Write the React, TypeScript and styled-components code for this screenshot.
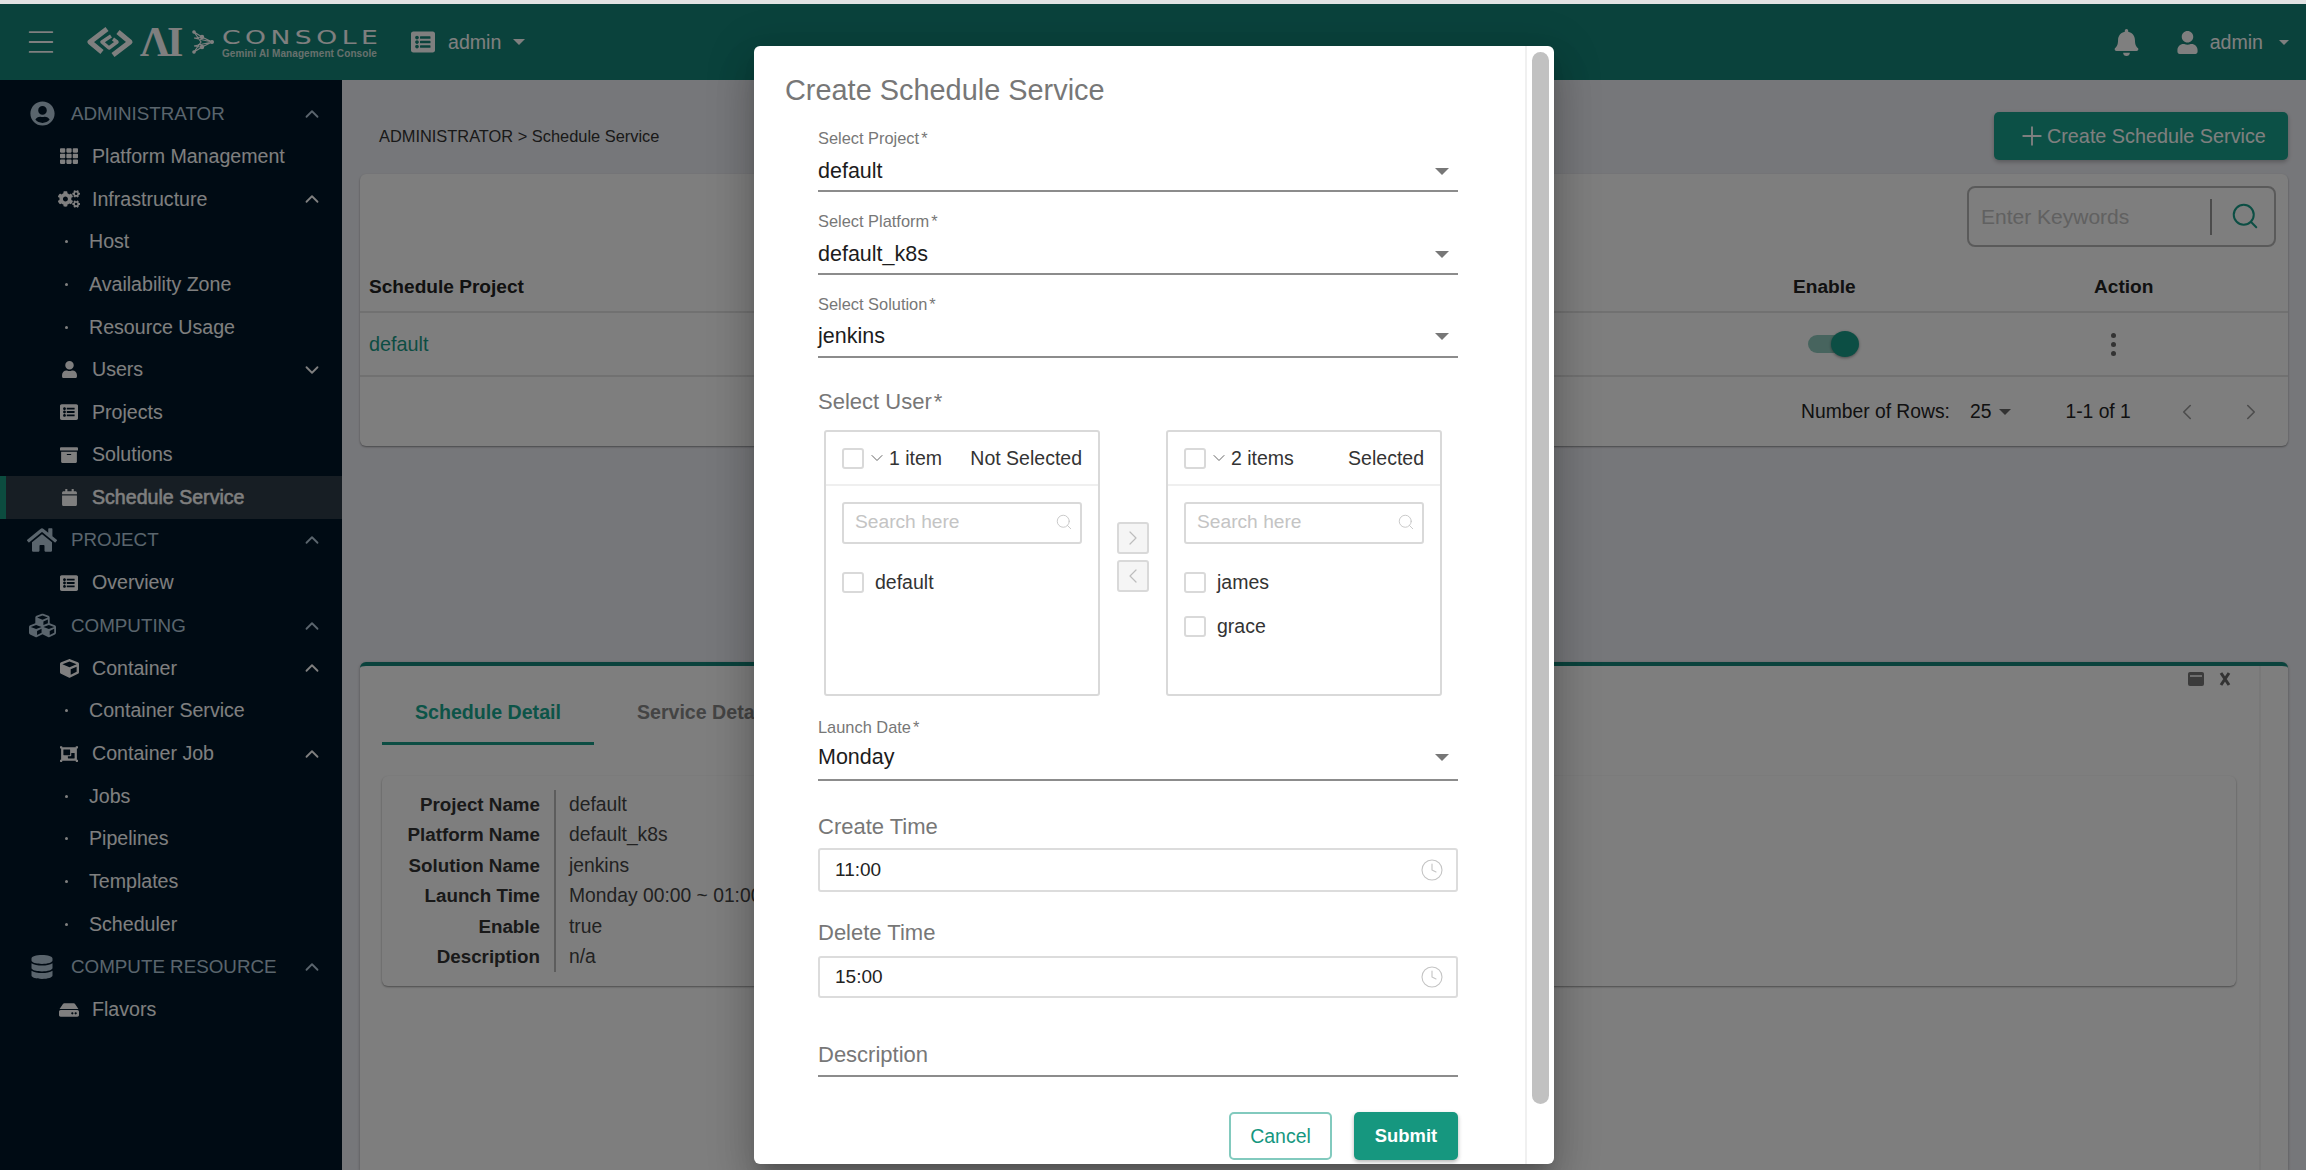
import React, { FC, ReactNode } from "react";
import styled, { createGlobalStyle } from "styled-components";
import { ChevronDown, ChevronLeft, ChevronRight, ChevronUp, Clock, Menu, Plus, Search } from "lucide-react";
import {
  FaArchive,
  FaBell,
  FaCalendar,
  FaCogs,
  FaCube,
  FaCubes,
  FaDatabase,
  FaHdd,
  FaHome,
  FaListAlt,
  FaObjectGroup,
  FaTh,
  FaUser,
  FaUserCircle,
} from "react-icons/fa";

const GlobalStyle = createGlobalStyle`
  html, body {
    margin: 0;
    padding: 0;
    background: #e2e3e3;
  }
  * {
    box-sizing: border-box;
  }
  body {
    font-family: "Liberation Sans", Arial, sans-serif;
    color: #333;
    overflow: hidden;
  }
`;

const Page = styled.div`
  position: relative;
  width: 2306px;
  height: 1170px;
  overflow: hidden;
  display: flex;
  flex-direction: column;
  padding-top: 4px;
`;

const Header = styled.header`
  height: 76px;
  flex: none;
  background: #158578;
  color: #fff;
  display: flex;
  align-items: center;
  padding-left: 24px;
`;

const LogoMark = styled.svg`
  margin-left: 28px;
  width: 48px;
  height: 32px;
  flex: none;
`;

const LogoAi = styled.span`
  margin-left: 6px;
  width: 44px;
  font-family: "Liberation Serif", serif;
  font-size: 42px;
  line-height: 42px;
  font-weight: 700;
  letter-spacing: -3px;
`;

const LogoNet = styled.svg`
  margin-left: 8px;
  width: 22px;
  height: 26px;
  flex: none;
`;

const LogoText = styled.div`
  margin-left: 8px;
  width: 156px;
  display: flex;
  flex-direction: column;
  gap: 3px;
  padding-top: 2px;
`;

const LogoWord = styled.span`
  display: block;
  font-family: "DejaVu Sans", sans-serif;
  font-size: 19px;
  line-height: 18px;
  letter-spacing: 3.2px;
  transform: scaleX(1.4);
  transform-origin: left center;
  white-space: nowrap;
`;

const LogoSub = styled.span`
  font-size: 10px;
  line-height: 10px;
  font-weight: 700;
  letter-spacing: 0.09px;
  white-space: nowrap;
  color: #cfe0dc;
`;

const HeaderMenu = styled.div`
  margin-left: 33px;
  display: flex;
  align-items: center;
  font-size: 19.6px;
  gap: 13px;
`;

const HeaderRight = styled.div`
  margin-left: auto;
  display: flex;
  align-items: center;
  padding-right: 17px;
`;

const UserIcon = styled(FaUser)`
  margin-left: 36px;
`;

const UserName = styled.span`
  margin-left: 11px;
  font-size: 19.6px;
`;

const Caret = styled.i<{ $size?: number; $tone?: string; $gap?: number }>`
  display: inline-block;
  width: 0;
  height: 0;
  margin-left: ${(p) => p.$gap ?? 0}px;
  border-left: ${(p) => p.$size ?? 7}px solid transparent;
  border-right: ${(p) => p.$size ?? 7}px solid transparent;
  border-top: ${(p) => p.$size ?? 7}px solid ${(p) => p.$tone ?? "currentColor"};
`;

const Body = styled.div`
  flex: 1;
  min-height: 0;
  display: flex;
`;

const Sidebar = styled.nav`
  width: 342px;
  flex: none;
  background: #001628;
  padding-top: 12.4px;
`;

const Row = styled.div<{ $active?: boolean }>`
  height: 42.67px;
  display: flex;
  align-items: center;
  padding-right: 19px;
  background: ${(p) => (p.$active ? "#2f3c48" : "transparent")};
  border-left: 6px solid ${(p) => (p.$active ? "#18987f" : "transparent")};
  color: #fff;
  font-size: 19.6px;
  -webkit-text-stroke: ${(p) => (p.$active ? "0.5px #fff" : "0")};
`;

const SectionRow = styled(Row)`
  color: #b5cada;
  font-size: 18.8px;
`;

const IconSlot = styled.span<{ $left: number; $width: number }>`
  margin-left: ${(p) => p.$left}px;
  width: ${(p) => p.$width}px;
  flex: none;
  display: flex;
  justify-content: center;
  align-items: center;
`;

const RowLabel = styled.span<{ $gap?: number }>`
  flex: 1;
  margin-left: ${(p) => p.$gap ?? 0}px;
  white-space: nowrap;
`;

const SubDot = styled.span`
  margin-left: 59px;
  margin-right: 21px;
  width: 3px;
  height: 3px;
  background: #fff;
  border-radius: 50%;
  flex: none;
`;

const Main = styled.main`
  flex: 1;
  min-width: 0;
  background: #edeef4;
  padding: 0 18px;
  display: flex;
  flex-direction: column;
`;

const TopBar = styled.div`
  margin-top: 32px;
  height: 48px;
  flex: none;
  display: flex;
  align-items: center;
  justify-content: space-between;
  padding-left: 19px;
`;

const Crumb = styled.div`
  font-size: 16.4px;
  color: #333;
`;

const CreateButton = styled.button`
  width: 294px;
  height: 48px;
  border: 0;
  border-radius: 5px;
  background: #18a08c;
  color: #fff;
  font: 400 19.8px "Liberation Sans", sans-serif;
  display: flex;
  align-items: center;
  padding: 0 0 0 23px;
  box-shadow: 0 2px 4px rgba(0, 0, 0, 0.25);
`;

const Card = styled.section`
  margin-top: 14px;
  height: 272px;
  flex: none;
  background: #fcfcfc;
  border-radius: 6px;
  box-shadow: 0 1px 2px rgba(0, 0, 0, 0.4);
  display: flex;
  flex-direction: column;
`;

const SearchRow = styled.div`
  height: 90px;
  flex: none;
  display: flex;
  justify-content: flex-end;
  padding: 12px 12px 0 0;
`;

const SearchBox = styled.div`
  width: 309px;
  height: 61px;
  border: 2px solid #b5b5b5;
  border-radius: 8px;
  display: flex;
  align-items: center;
  padding-left: 12px;
  color: #c2c2c2;
  font-size: 21px;
`;

const SearchHint = styled.span`
  flex: 1;
  height: 36px;
  line-height: 36px;
  border-right: 2px solid #999;
`;

const SearchIconWrap = styled.span`
  width: 62px;
  padding-left: 4px;
  margin-top: -2px;
  display: flex;
  justify-content: center;
  color: #189c88;
`;

const TableGrid = styled.div<{ $height: number }>`
  height: ${(p) => p.$height}px;
  flex: none;
  display: grid;
  grid-template-columns: 1424px 301px 1fr;
  align-items: center;
  padding-left: 9px;
  font-size: 19.8px;
  border-bottom: 2px solid #e3e3e3;
`;

const HeadCell = styled.div`
  font-size: 19.1px;
  font-weight: 700;
  color: #222;
  padding-bottom: 2px;
`;

const TealLink = styled.span`
  color: #189a86;
`;

const Toggle = styled.span`
  margin-left: 15px;
  display: block;
  position: relative;
  width: 36px;
  height: 18px;
  border-radius: 9px;
  background: #8fc9bd;
`;

const ToggleKnob = styled.span`
  position: absolute;
  top: -4px;
  right: -15px;
  width: 28px;
  height: 26px;
  border-radius: 50%;
  background: #189c88;
  box-shadow: 0 1px 3px rgba(0, 0, 0, 0.4);
`;

const MoreDots = styled.span`
  margin-left: 17px;
  display: flex;
  flex-direction: column;
  gap: 4px;
  width: 6px;
`;

const Dot = styled.i`
  display: block;
  width: 5px;
  height: 5px;
  border-radius: 50%;
  background: #666;
`;

const Pager = styled.div`
  flex: 1;
  display: flex;
  align-items: center;
  padding-left: 1441px;
  font-size: 19.3px;
  color: #222;
`;

const PagerValue = styled.span<{ $left: number }>`
  margin-left: ${(p) => p.$left}px;
  display: flex;
  align-items: center;
`;

const Panel = styled.section`
  margin-top: 216px;
  flex: 1;
  min-height: 0;
  background: #fcfcfc;
  border-top: 4px solid #158578;
  border-radius: 6px 6px 0 0;
  box-shadow: 0 1px 3px rgba(0, 0, 0, 0.35);
  display: flex;
`;

const PanelBody = styled.div`
  flex: 1;
  min-width: 0;
  display: flex;
  flex-direction: column;
`;

const PanelTrack = styled.div`
  width: 29px;
  flex: none;
  border-left: 2px solid #f0f0f0;
`;

const PanelActions = styled.div`
  height: 20px;
  margin-top: 3px;
  display: flex;
  justify-content: flex-end;
  align-items: center;
  gap: 15px;
  padding-right: 28px;
  color: #666;
`;

const MinimizeBox = styled.span`
  display: block;
  width: 16px;
  height: 14px;
  border-radius: 2px;
  background: #777;
  border-top: 3px solid #777;
  position: relative;
  &::after {
    content: "";
    position: absolute;
    left: 2px;
    right: 2px;
    top: 0;
    height: 2px;
    background: #ddd;
  }
`;

const CloseMark = styled.svg`
  width: 12px;
  height: 14px;
`;

const Tabs = styled.div`
  display: flex;
  margin: 0 0 0 22px;
  height: 56px;
`;

const Tab = styled.div<{ $active?: boolean }>`
  height: 56px;
  padding: 8px 33px 0;
  line-height: 30px;
  font-size: 19.6px;
  font-weight: 700;
  white-space: nowrap;
  color: ${(p) => (p.$active ? "#18a890" : "#888")};
  border-bottom: 3px solid ${(p) => (p.$active ? "#189a86" : "transparent")};
  margin-right: 10px;
`;

const DetailCard = styled.div`
  margin: 31px 23px 0 22px;
  height: 210px;
  background: #fdfdfd;
  border-radius: 6px;
  box-shadow: 0 1px 2px rgba(0, 0, 0, 0.4);
  padding-top: 14px;
  display: grid;
  grid-template-columns: 174px 1fr;
  grid-auto-rows: 30.4px;
  font-size: 19.3px;
  align-items: stretch;
`;

const DetailName = styled.div`
  font-size: 18.8px;
  font-weight: 700;
  color: #333;
  text-align: right;
  padding-right: 14px;
  border-right: 2px solid #bbb;
  line-height: 30.4px;
`;

const DetailValue = styled.div`
  padding-left: 13px;
  color: #444;
  line-height: 30.4px;
  white-space: nowrap;
`;

const Overlay = styled.div`
  position: absolute;
  left: 0;
  right: 0;
  top: 4px;
  bottom: 0;
  background: rgba(0, 0, 0, 0.5);
`;

const Modal = styled.div`
  position: absolute;
  left: 754px;
  top: 46px;
  width: 800px;
  height: 1118px;
  background: #fff;
  border-radius: 6px;
  overflow: hidden;
  display: flex;
  box-shadow: 0 11px 15px -7px rgba(0, 0, 0, 0.2), 0 24px 38px 3px rgba(0, 0, 0, 0.14),
    0 9px 46px 8px rgba(0, 0, 0, 0.12);
`;

const ModalScroll = styled.div`
  flex: 1;
  min-width: 0;
  padding: 26px 0 0 31px;
  overflow: hidden;
`;

const ModalGutter = styled.div`
  width: 29px;
  flex: none;
  border-left: 2px solid #f0f0f0;
  padding: 6px 5px 0 5px;
`;

const ScrollThumb = styled.div`
  width: 17px;
  height: 1052px;
  border-radius: 9px;
  background: #c1c1c1;
`;

const ModalTitle = styled.h2`
  margin: 0 0 22px;
  height: 34px;
  line-height: 36px;
  font-size: 28.9px;
  font-weight: 400;
  color: #777;
`;

const Form = styled.div`
  margin-left: 33px;
  width: 640px;
`;

const Field = styled.div<{ $top?: number }>`
  margin-top: ${(p) => p.$top ?? 0}px;
`;

const SmallLabel = styled.div`
  height: 20px;
  line-height: 20px;
  font-size: 16.4px;
  color: #777;
`;

const Required = styled.span`
  margin-left: 2px;
`;

const SelectBox = styled.div<{ $lift?: number }>`
  height: 44px;
  padding-top: ${(p) => 4 - (p.$lift ?? 0)}px;
  padding-bottom: ${(p) => p.$lift ?? 0}px;
  border-bottom: 2px solid #8c8c8c;
  display: flex;
  align-items: center;
  justify-content: space-between;
  padding-right: 9px;
  font-size: 21.5px;
  color: #1c1c1c;
`;

const BigLabel = styled.div<{ $top: number }>`
  margin-top: ${(p) => p.$top}px;
  height: 26px;
  line-height: 26px;
  font-size: 22px;
  color: #777;
`;

const TransferWrap = styled.div`
  margin: 15px 0 0 6px;
  display: flex;
`;

const TransferBox = styled.div`
  width: 276px;
  height: 266px;
  flex: none;
  border: 2px solid #d9d9d9;
  border-radius: 3px;
`;

const TransferHead = styled.div`
  height: 54px;
  border-bottom: 2px solid #efefef;
  padding: 0 16px;
  display: flex;
  align-items: center;
  font-size: 19.5px;
  color: #333;
`;

const Check = styled.span`
  display: block;
  width: 22px;
  height: 21px;
  flex: none;
  border: 2px solid #d9d9d9;
  border-radius: 3px;
  background: #fff;
`;

const HeadChevron = styled.span`
  margin: 0 2px 0 3px;
  display: flex;
  color: #666;
`;

const HeadTitle = styled.span`
  margin-left: auto;
`;

const TransferSearch = styled.div`
  margin: 16px 16px 16px;
  height: 42px;
  border: 2px solid #d9d9d9;
  border-radius: 3px;
  padding: 0 7px 2px 11px;
  display: flex;
  align-items: center;
  justify-content: space-between;
  font-size: 19.2px;
  color: #c4c4c4;
`;

const TransferItem = styled.div`
  height: 44px;
  padding: 0 16px;
  display: flex;
  align-items: center;
  gap: 11px;
  font-size: 19.5px;
  color: #333;
`;

const TransferButtons = styled.div`
  width: 66px;
  flex: none;
  padding-top: 92px;
  display: flex;
  flex-direction: column;
  align-items: center;
  gap: 6px;
`;

const MoveButton = styled.span`
  width: 32px;
  height: 32px;
  border: 2px solid #d9d9d9;
  border-radius: 3px;
  background: #f5f5f5;
  color: #bdbdbd;
  display: flex;
  align-items: center;
  justify-content: center;
`;

const TimeInput = styled.div<{ $height: number; $top: number }>`
  margin-top: ${(p) => p.$top}px;
  height: ${(p) => p.$height}px;
  border: 2px solid #dcdcdc;
  border-radius: 3px;
  padding: 0 12px 0 15px;
  display: flex;
  align-items: center;
  justify-content: space-between;
  font-size: 19px;
  color: #222;
`;

const DescriptionField = styled.div`
  margin-top: 41px;
  height: 38px;
  border-bottom: 2px solid #8c8c8c;
  font-size: 22px;
  line-height: 32px;
  color: #777;
`;

const Actions = styled.div`
  margin-top: 35px;
  display: flex;
  justify-content: flex-end;
  gap: 22px;
`;

const CancelButton = styled.button`
  width: 103px;
  height: 48px;
  border: 2px solid #82cabe;
  border-radius: 5px;
  background: #fff;
  color: #16977f;
  font: 400 19.5px "Liberation Sans", sans-serif;
`;

const SubmitButton = styled.button`
  width: 104px;
  height: 48px;
  border: 0;
  border-radius: 5px;
  background: #16977f;
  color: #fff;
  font: 700 18.4px "Liberation Sans", sans-serif;
  box-shadow: 0 2px 4px rgba(0, 0, 0, 0.3);
`;

type NavEntry = {
  label: string;
  kind: "section" | "item" | "sub";
  icon?: ReactNode;
  arrow?: "up" | "down";
  active?: boolean;
};

const nav: NavEntry[] = [
  { label: "ADMINISTRATOR", kind: "section", icon: <FaUserCircle size={25} />, arrow: "up" },
  { label: "Platform Management", kind: "item", icon: <FaTh size={18} /> },
  { label: "Infrastructure", kind: "item", icon: <FaCogs size={22} />, arrow: "up" },
  { label: "Host", kind: "sub" },
  { label: "Availability Zone", kind: "sub" },
  { label: "Resource Usage", kind: "sub" },
  { label: "Users", kind: "item", icon: <FaUser size={17} />, arrow: "down" },
  { label: "Projects", kind: "item", icon: <FaListAlt size={18} /> },
  { label: "Solutions", kind: "item", icon: <FaArchive size={18} /> },
  { label: "Schedule Service", kind: "item", icon: <FaCalendar size={17} />, active: true },
  { label: "PROJECT", kind: "section", icon: <FaHome size={30} />, arrow: "up" },
  { label: "Overview", kind: "item", icon: <FaListAlt size={18} /> },
  { label: "COMPUTING", kind: "section", icon: <FaCubes size={27} />, arrow: "up" },
  { label: "Container", kind: "item", icon: <FaCube size={19} />, arrow: "up" },
  { label: "Container Service", kind: "sub" },
  { label: "Container Job", kind: "item", icon: <FaObjectGroup size={18} />, arrow: "up" },
  { label: "Jobs", kind: "sub" },
  { label: "Pipelines", kind: "sub" },
  { label: "Templates", kind: "sub" },
  { label: "Scheduler", kind: "sub" },
  { label: "COMPUTE RESOURCE", kind: "section", icon: <FaDatabase size={24} />, arrow: "up" },
  { label: "Flavors", kind: "item", icon: <FaHdd size={20} /> },
];

const details = [
  ["Project Name", "default"],
  ["Platform Name", "default_k8s"],
  ["Solution Name", "jenkins"],
  ["Launch Time", "Monday 00:00 ~ 01:00"],
  ["Enable", "true"],
  ["Description", "n/a"],
];

const NavRow: FC<{ entry: NavEntry }> = ({ entry }) => {
  const arrow =
    entry.arrow === "up" ? <ChevronUp size={22} strokeWidth={2} /> : entry.arrow === "down" ? <ChevronDown size={22} strokeWidth={2} /> : null;
  if (entry.kind === "section") {
    return (
      <SectionRow>
        <IconSlot $left={20} $width={32}>
          {entry.icon}
        </IconSlot>
        <RowLabel $gap={13}>{entry.label}</RowLabel>
        {arrow}
      </SectionRow>
    );
  }
  if (entry.kind === "sub") {
    return (
      <Row>
        <SubDot />
        <RowLabel>{entry.label}</RowLabel>
      </Row>
    );
  }
  return (
    <Row $active={entry.active}>
      <IconSlot $left={48} $width={30}>
        {entry.icon}
      </IconSlot>
      <RowLabel $gap={8}>{entry.label}</RowLabel>
      {arrow}
    </Row>
  );
};

const Transfer: FC<{ count: string; title: string; items: string[] }> = ({ count, title, items }) => (
  <TransferBox>
    <TransferHead>
      <Check />
      <HeadChevron>
        <ChevronDown size={20} strokeWidth={1.2} />
      </HeadChevron>
      {count}
      <HeadTitle>{title}</HeadTitle>
    </TransferHead>
    <TransferSearch>
      Search here
      <Search size={18} strokeWidth={1.2} />
    </TransferSearch>
    {items.map((item) => (
      <TransferItem key={item}>
        <Check />
        {item}
      </TransferItem>
    ))}
  </TransferBox>
);

const SelectField: FC<{ label: string; value: string; top?: number; lift?: number }> = ({ label, value, top, lift }) => (
  <Field $top={top}>
    <SmallLabel>
      {label}
      <Required>*</Required>
    </SmallLabel>
    <SelectBox $lift={lift}>
      {value}
      <Caret $tone="#777" />
    </SelectBox>
  </Field>
);

const Logo: FC = () => (
  <>
    <LogoMark viewBox="0 0 48 32" fill="none" stroke="currentColor" strokeWidth="5" strokeLinejoin="round">
      <path d="M21 3 L4 16 L16 26" />
      <path d="M27 29 L44 16 L32 6" />
      <path d="M25 10 L16 16 L23 22 L31 16 L27 13" strokeWidth="3.5" />
    </LogoMark>
    <LogoAi>ΛI</LogoAi>
    <LogoNet viewBox="0 0 22 26" fill="currentColor" stroke="currentColor" strokeWidth="1.2">
      <path d="M2 3 L10 8 L20 13 L10 18 L2 23 M2 3 L9 13 L2 23 M2 9 L10 8 M2 17 L10 18 M2 9 L20 13 L2 17" fill="none" />
      <circle cx="20" cy="13" r="1.4" />
      <circle cx="10" cy="8" r="1.6" />
      <circle cx="10" cy="18" r="1.6" />
      <circle cx="2" cy="3" r="1.2" />
      <circle cx="2" cy="23" r="1.2" />
    </LogoNet>
    <LogoText>
      <LogoWord>CONSOLE</LogoWord>
      <LogoSub>Gemini AI Management Console</LogoSub>
    </LogoText>
  </>
);

const App: FC = () => (
  <Page>
    <GlobalStyle />
    <Header>
      <Menu size={34} strokeWidth={1.3} />
      <Logo />
      <HeaderMenu>
        <FaListAlt size={24} />
        admin
        <Caret $size={6} $gap={-1} />
      </HeaderMenu>
      <HeaderRight>
        <FaBell size={27} />
        <UserIcon size={23} />
        <UserName>admin</UserName>
        <Caret $size={5} $gap={16} />
      </HeaderRight>
    </Header>
    <Body>
      <Sidebar>
        {nav.map((entry) => (
          <NavRow key={entry.label} entry={entry} />
        ))}
      </Sidebar>
      <Main>
        <TopBar>
          <Crumb>ADMINISTRATOR &gt; Schedule Service</Crumb>
          <CreateButton>
            <Plus size={30} strokeWidth={1.5} />
            Create Schedule Service
          </CreateButton>
        </TopBar>
        <Card>
          <SearchRow>
            <SearchBox>
              <SearchHint>Enter Keywords</SearchHint>
              <SearchIconWrap>
                <Search size={30} strokeWidth={1.6} />
              </SearchIconWrap>
            </SearchBox>
          </SearchRow>
          <TableGrid $height={49}>
            <HeadCell>Schedule Project</HeadCell>
            <HeadCell>Enable</HeadCell>
            <HeadCell>Action</HeadCell>
          </TableGrid>
          <TableGrid $height={64}>
            <TealLink>default</TealLink>
            <Toggle>
              <ToggleKnob />
            </Toggle>
            <MoreDots>
              <Dot />
              <Dot />
              <Dot />
            </MoreDots>
          </TableGrid>
          <Pager>
            Number of Rows:
            <PagerValue $left={20}>
              25
              <Caret $size={6} $tone="#666" $gap={8} />
            </PagerValue>
            <PagerValue $left={54}>1-1 of 1</PagerValue>
            <PagerValue $left={43}>
              <ChevronLeft size={26} strokeWidth={1.5} color="#999" />
            </PagerValue>
            <PagerValue $left={38}>
              <ChevronRight size={26} strokeWidth={1.5} color="#999" />
            </PagerValue>
          </Pager>
        </Card>
        <Panel>
          <PanelBody>
            <PanelActions>
              <MinimizeBox />
              <CloseMark viewBox="0 0 12 14" stroke="#666" strokeWidth="3">
                <path d="M2 1 L10 13 M10 1 L2 13" />
              </CloseMark>
            </PanelActions>
            <Tabs>
              <Tab $active>Schedule Detail</Tab>
              <Tab>Service Detail</Tab>
            </Tabs>
            <DetailCard>
              {details.map(([name, value]) => (
                <React.Fragment key={name}>
                  <DetailName>{name}</DetailName>
                  <DetailValue>{value}</DetailValue>
                </React.Fragment>
              ))}
            </DetailCard>
          </PanelBody>
          <PanelTrack />
        </Panel>
      </Main>
    </Body>
    <Overlay />
    <Modal>
      <ModalScroll>
        <ModalTitle>Create Schedule Service</ModalTitle>
        <Form>
          <SelectField label="Select Project" value="default" />
          <SelectField label="Select Platform" value="default_k8s" top={19} />
          <SelectField label="Select Solution" value="jenkins" top={19} lift={1} />
          <BigLabel $top={31}>
            Select User
            <Required>*</Required>
          </BigLabel>
          <TransferWrap>
            <Transfer count="1 item" title="Not Selected" items={["default"]} />
            <TransferButtons>
              <MoveButton>
                <ChevronRight size={24} strokeWidth={1.2} />
              </MoveButton>
              <MoveButton>
                <ChevronLeft size={24} strokeWidth={1.2} />
              </MoveButton>
            </TransferButtons>
            <Transfer count="2 items" title="Selected" items={["james", "grace"]} />
          </TransferWrap>
          <SelectField label="Launch Date" value="Monday" top={21} lift={3} />
          <BigLabel $top={33}>Create Time</BigLabel>
          <TimeInput $top={8} $height={44}>
            11:00
            <Clock size={24} strokeWidth={1.1} color="#c4c4c4" />
          </TimeInput>
          <BigLabel $top={28}>Delete Time</BigLabel>
          <TimeInput $top={10} $height={42}>
            15:00
            <Clock size={24} strokeWidth={1.1} color="#c4c4c4" />
          </TimeInput>
          <DescriptionField>Description</DescriptionField>
          <Actions>
            <CancelButton>Cancel</CancelButton>
            <SubmitButton>Submit</SubmitButton>
          </Actions>
        </Form>
      </ModalScroll>
      <ModalGutter>
        <ScrollThumb />
      </ModalGutter>
    </Modal>
  </Page>
);

export default App;
